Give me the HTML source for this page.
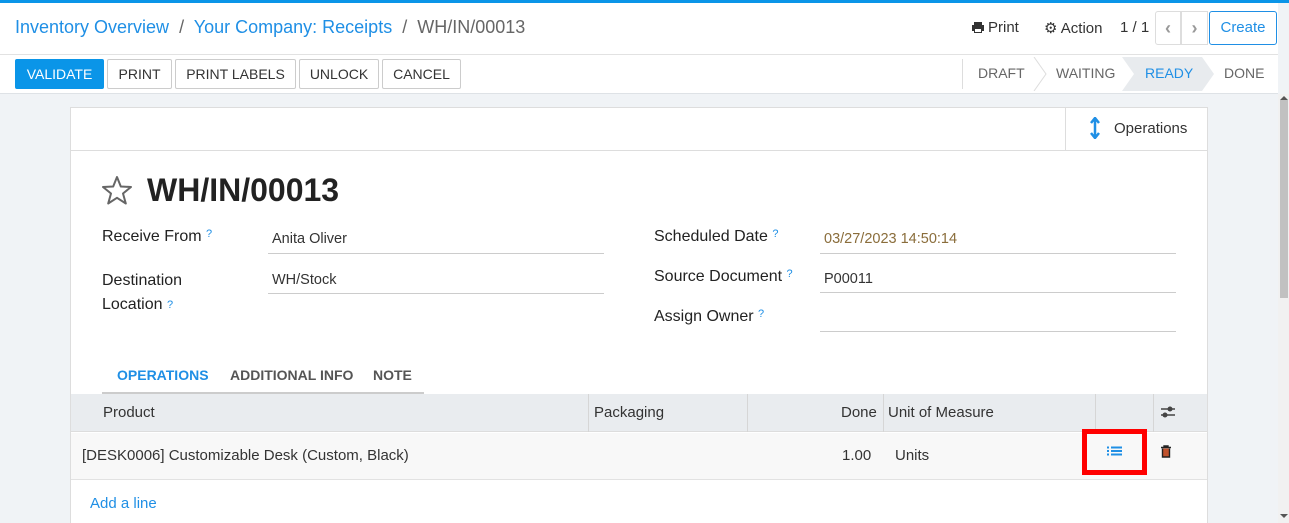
<!DOCTYPE html>
<html style="overflow:hidden;height:523px"><head><style>
*{box-sizing:border-box;margin:0;padding:0}
body{width:1289px;height:523px;overflow:hidden;font-family:"Liberation Sans",sans-serif;background:#f0f3f6;position:relative;color:#4c4c4c}
.abs{position:absolute}
.top{left:0;top:0;width:1289px;height:3px;background:#0a95e8}
.cp{left:0;top:3px;width:1278px;height:91px;background:#fff;border-bottom:1px solid #dee2e6}
.hr{left:0;top:54px;width:1278px;height:1px;background:#e2e2e2}
.bc{left:15px;top:17px;font-size:18px;color:#1f8fe5}
.bc span{color:#666}
.btn{top:59px;height:30px;border:1px solid #ccc;border-radius:2px;background:#fff;font-size:14px;color:#333;line-height:28px;text-align:center}
.sheet{left:70px;top:107px;width:1138px;height:416px;background:#fff;border:1px solid #ddd;border-bottom:none}
.lbl{font-size:16px;color:#222}
.q{color:#1f8fe5;font-size:11px;vertical-align:top}
.val{font-size:14.5px;color:#333;border-bottom:1px solid #ccc;height:26px;padding-left:4px}
.th{font-size:15px;color:#333}
.tab{font-size:14px;font-weight:bold;color:#555;top:367px}
</style></head><body>
<div class="abs top"></div>
<div class="abs cp"></div>
<div class="abs hr"></div>
<div class="abs bc">Inventory Overview <span>&nbsp;/&nbsp;</span> Your Company: Receipts <span>&nbsp;/&nbsp; WH/IN/00013</span></div>
<svg class="abs" style="left:971px;top:21px" width="14" height="13"><path d="M3 1H11V4H3Z M1 4H13V10H11V12H3V10H1Z" fill="#333"/><rect x="4" y="8" width="6" height="3" fill="#fff"/></svg>
<div class="abs" style="left:988px;top:19px;font-size:15px;color:#333">Print</div>
<div class="abs" style="left:1044px;top:19px;font-size:15px;color:#333">⚙ Action</div>
<div class="abs" style="left:1120px;top:19px;font-size:15px;color:#333">1 / 1</div>
<div class="abs" style="left:1155px;top:11px;width:26px;height:34px;border:1px solid #ddd;border-radius:3px 0 0 3px;text-align:center;line-height:32px;color:#999;font-size:18px;font-weight:bold">‹</div>
<div class="abs" style="left:1181px;top:11px;width:27px;height:34px;border:1px solid #ddd;text-align:center;line-height:32px;color:#999;font-size:18px;font-weight:bold">›</div>
<div class="abs" style="left:1209px;top:11px;width:68px;height:34px;border:1px solid #1f8fe5;border-radius:3px;text-align:center;line-height:32px;color:#1f8fe5;font-size:15px">Create</div>
<div class="abs btn" style="left:15px;width:89px;background:#0a95e8;border-color:#0a95e8;color:#fff">VALIDATE</div>
<div class="abs btn" style="left:107px;width:65px">PRINT</div>
<div class="abs btn" style="left:175px;width:121px">PRINT LABELS</div>
<div class="abs btn" style="left:299px;width:80px">UNLOCK</div>
<div class="abs btn" style="left:382px;width:79px">CANCEL</div>
<svg class="abs" style="left:962px;top:57px" width="316" height="34">
<path d="M0.5 2V32" stroke="#ddd"/>
<polygon points="160,0 240,0 252,17 240,34 160,34 172,17" fill="#e8ebee"/>
<path d="M72 0L84 17L72 34" stroke="#ddd" fill="none"/>
<text x="16" y="21" font-size="14" fill="#666" font-family="Liberation Sans">DRAFT</text>
<text x="94" y="21" font-size="14" fill="#666" font-family="Liberation Sans">WAITING</text>
<text x="183" y="21" font-size="14" fill="#1f8fe5" font-family="Liberation Sans">READY</text>
<text x="262" y="21" font-size="14" fill="#666" font-family="Liberation Sans">DONE</text>
</svg>
<div class="abs" style="left:1278px;top:94px;width:11px;height:429px;background:#f1f1f1"></div>
<div class="abs" style="left:1280px;top:100px;width:8px;height:198px;background:#c1c1c1"></div>
<div class="abs" style="left:1280px;top:96px;width:0;height:0;border-left:4px solid transparent;border-right:4px solid transparent;border-bottom:4px solid #555"></div>
<div class="abs" style="left:1280px;top:514px;width:0;height:0;border-left:4px solid transparent;border-right:4px solid transparent;border-top:4px solid #555"></div>
<div class="abs sheet"></div>
<div class="abs" style="left:70px;top:150px;width:1138px;height:1px;background:#ddd"></div>
<div class="abs" style="left:1065px;top:107px;width:1px;height:43px;background:#ddd"></div>
<svg class="abs" style="left:1089px;top:117px" width="12" height="22"><path d="M6 2V20M2 6L6 1L10 6M2 16L6 21L10 16" stroke="#1f8fe5" stroke-width="2.5" fill="none"/></svg>
<div class="abs" style="left:1114px;top:120px;font-size:15px;color:#333">Operations</div>
<svg class="abs" style="left:101px;top:175px" width="32" height="30"><path d="M16 2L19.8 11.5L30 12L22 18.5L24.8 28.5L16 22.8L7.2 28.5L10 18.5L2 12L12.2 11.5Z" fill="none" stroke="#666" stroke-width="2" stroke-linejoin="round"/></svg>
<div class="abs" style="left:147px;top:172px;font-size:32px;font-weight:bold;color:#222">WH/IN/00013</div>
<div class="abs lbl" style="left:102px;top:228px">Receive From <span class="q">?</span></div>
<div class="abs val" style="left:268px;top:228px;width:336px;padding-top:3px">Anita Oliver</div>
<div class="abs lbl" style="left:102px;top:269px;line-height:24px">Destination<br>Location <span class="q">?</span></div>
<div class="abs val" style="left:268px;top:268px;width:336px;padding-top:4px">WH/Stock</div>
<div class="abs lbl" style="left:654px;top:228px">Scheduled Date <span class="q">?</span></div>
<div class="abs val" style="left:820px;top:228px;width:356px;padding-top:3px;color:#8a6d3b">03/27/2023 14:50:14</div>
<div class="abs lbl" style="left:654px;top:268px">Source Document <span class="q">?</span></div>
<div class="abs val" style="left:820px;top:267px;width:356px;padding-top:4px">P00011</div>
<div class="abs lbl" style="left:654px;top:308px">Assign Owner <span class="q">?</span></div>
<div class="abs val" style="left:820px;top:306px;width:356px"></div>
<div class="abs tab" style="left:117px;color:#1f8fe5">OPERATIONS</div>
<div class="abs tab" style="left:230px">ADDITIONAL INFO</div>
<div class="abs tab" style="left:373px">NOTE</div>
<div class="abs" style="left:102px;top:392px;width:322px;height:2px;background:#ccc"></div>
<div class="abs" style="left:71px;top:394px;width:1136px;height:38px;background:#e9ecef;border-bottom:1px solid #ddd"></div>
<div class="abs" style="left:588px;top:394px;width:1px;height:38px;background:#d6d6d6"></div>
<div class="abs" style="left:747px;top:394px;width:1px;height:38px;background:#d6d6d6"></div>
<div class="abs" style="left:883px;top:394px;width:1px;height:38px;background:#d6d6d6"></div>
<div class="abs" style="left:1095px;top:394px;width:1px;height:38px;background:#d6d6d6"></div>
<div class="abs" style="left:1153px;top:394px;width:1px;height:38px;background:#d6d6d6"></div>
<div class="abs th" style="left:103px;top:404px">Product</div>
<div class="abs th" style="left:594px;top:404px">Packaging</div>
<div class="abs th" style="left:841px;top:404px">Done</div>
<div class="abs th" style="left:888px;top:404px">Unit of Measure</div>
<svg class="abs" style="left:1160px;top:405px" width="16" height="14"><path d="M1 4H15M1 10H15" stroke="#444" stroke-width="1.5"/><circle cx="10" cy="4" r="2.5" fill="#444"/><circle cx="5" cy="10" r="2.5" fill="#444"/></svg>
<div class="abs" style="left:71px;top:433px;width:1136px;height:47px;background:#f8f8f8;border-bottom:1px solid #e2e2e2"></div>
<div class="abs" style="left:82px;top:447px;font-size:15px;color:#333">[DESK0006] Customizable Desk (Custom, Black)</div>
<div class="abs" style="left:842px;top:447px;font-size:15px;color:#333">1.00</div>
<div class="abs" style="left:895px;top:447px;font-size:15px;color:#333">Units</div>
<div class="abs" style="left:1082px;top:429px;width:65px;height:46px;border:5px solid #ff0000"></div>
<svg class="abs" style="left:1107px;top:446px" width="16" height="12"><path d="M0 1.5H2M4 1.5H15M0 5H2M4 5H15M0 8.5H2M4 8.5H15" stroke="#1f8fe5" stroke-width="2"/></svg>
<svg class="abs" style="left:1160px;top:445px" width="12" height="13"><path d="M1 2.5H11M4 2.5V1H8V2.5M2.5 3.5V12H9.5V3.5" stroke="#222" stroke-width="1.4" fill="#c0522d"/></svg>
<div class="abs" style="left:90px;top:495px;font-size:15px;color:#1f8fe5">Add a line</div>
</body></html>
